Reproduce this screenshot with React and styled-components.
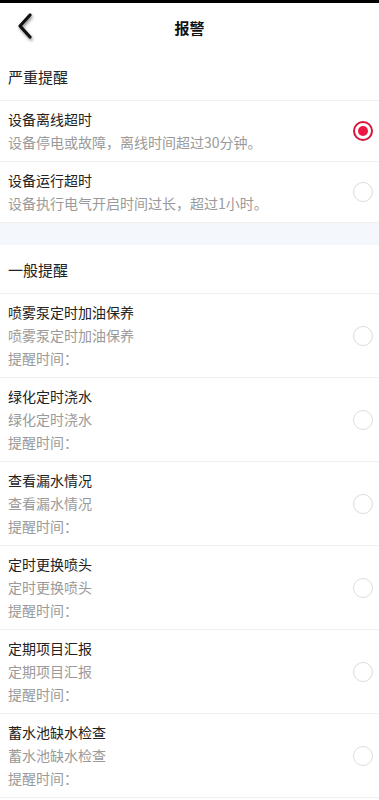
import React, { useState } from "react";
import styled, { createGlobalStyle } from "styled-components";

const Global = createGlobalStyle`
  html, body { margin: 0; padding: 0; background: #fff; }
  body { font-family: "Noto Sans CJK SC", "Noto Sans", sans-serif; color: #222; }
  * { box-sizing: border-box; }
`;

const Page = styled.div`
  width: 379px;
  min-height: 800px;
  background: #fff;
  border-top: 3px solid #000;
`;

const NavBar = styled.div`
  height: 49px;
  display: flex;
  align-items: center;
  justify-content: center;
  position: relative;
`;

const Back = styled.button`
  position: absolute;
  left: 10px;
  top: 6px;
  width: 30px;
  height: 34px;
  border: none;
  background: none;
  padding: 0;
  display: flex;
  align-items: center;
  justify-content: center;
  filter: drop-shadow(1px 2px 1.5px rgba(0, 0, 0, 0.45));
`;

const NavTitle = styled.h1`
  margin: 0;
  font-size: 15px;
  font-weight: 700;
  color: #111;
`;

const SectionHead = styled.div`
  height: 49px;
  display: flex;
  align-items: center;
  padding: 0 8px;
  font-size: 15px;
  color: #222;
  border-bottom: 1px solid #f1f1f1;
`;

const Gap = styled.div`
  height: 22px;
  background: #f4f7fb;
`;

const Row = styled.div`
  display: flex;
  align-items: center;
  padding: ${(p) => (p.$tall ? "7px 6px 7px 8px" : "7px 6px 7px 8px")};
  border-bottom: 1px solid #f1f1f1;
`;

const Texts = styled.div`
  flex: 1;
  display: flex;
  flex-direction: column;
`;

const Title = styled.div`
  font-size: 14px;
  line-height: 23px;
  color: #222;
`;

const Sub = styled.div`
  font-size: 14px;
  line-height: 23px;
  color: #9a9a9a;
`;

const Radio = styled.span`
  width: 20px;
  height: 20px;
  border-radius: 50%;
  flex-shrink: 0;
  border: ${(p) => (p.$on ? "2px solid #d8143a" : "1.5px solid #dcdcdc")};
  display: flex;
  align-items: center;
  justify-content: center;

  &::after {
    content: "";
    width: 10px;
    height: 10px;
    border-radius: 50%;
    background: ${(p) => (p.$on ? "#ee1744" : "transparent")};
  }
`;

const severe = [
  { title: "设备离线超时", desc: "设备停电或故障，离线时间超过30分钟。" },
  { title: "设备运行超时", desc: "设备执行电气开启时间过长，超过1小时。" },
];

const normal = [
  "喷雾泵定时加油保养",
  "绿化定时浇水",
  "查看漏水情况",
  "定时更换喷头",
  "定期项目汇报",
  "蓄水池缺水检查",
];

export default function App() {
  const [picked, setPicked] = useState("设备离线超时");
  return (
    <Page>
      <Global />
      <NavBar>
        <Back aria-label="返回">
          <svg width="18" height="28" viewBox="0 0 18 28">
            <path
              d="M14 3 L4 14 L14 25"
              fill="none"
              stroke="#111"
              strokeWidth="3.2"
              strokeLinecap="round"
              strokeLinejoin="round"
            />
          </svg>
        </Back>
        <NavTitle>报警</NavTitle>
      </NavBar>

      <SectionHead>严重提醒</SectionHead>
      {severe.map((s) => (
        <Row key={s.title} onClick={() => setPicked(s.title)}>
          <Texts>
            <Title>{s.title}</Title>
            <Sub>{s.desc}</Sub>
          </Texts>
          <Radio $on={picked === s.title} />
        </Row>
      ))}

      <Gap />

      <SectionHead>一般提醒</SectionHead>
      {normal.map((n) => (
        <Row key={n} $tall onClick={() => setPicked(n)}>
          <Texts>
            <Title>{n}</Title>
            <Sub>{n}</Sub>
            <Sub>提醒时间：</Sub>
          </Texts>
          <Radio $on={picked === n} />
        </Row>
      ))}
    </Page>
  );
}
